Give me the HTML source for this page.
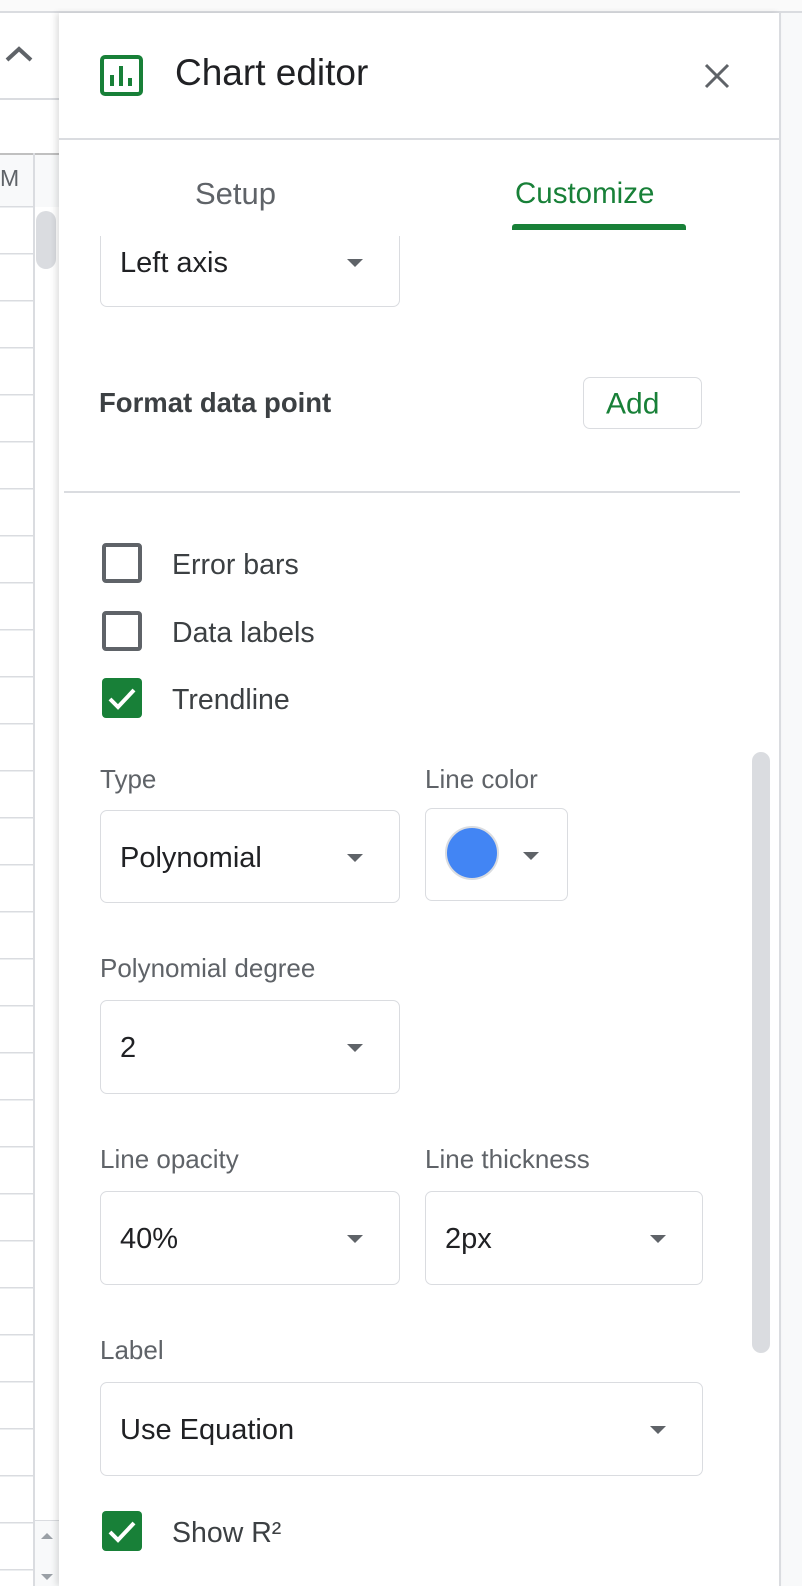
<!DOCTYPE html>
<html><head><meta charset="utf-8"><style>
*{box-sizing:border-box;margin:0;padding:0}
body{width:802px;height:1586px;position:relative;overflow:hidden;background:#fff;font-family:"Liberation Sans",Arial,sans-serif;color:#202124}
.a{position:absolute}
.dd{position:absolute;border:1.5px solid #dadce0;border-radius:7px;background:#fff}
.dd span{position:absolute;left:19px;top:50%;transform:translateY(-46%);font-size:29px;color:#202124}
.arr{position:absolute;width:0;height:0;border-left:8px solid transparent;border-right:8px solid transparent;border-top:8px solid #5f6368;top:50%;margin-top:-3px}
.lbl{position:absolute;font-size:26px;color:#5f6368}
.cb{position:absolute;left:102px;width:40px;height:40px;border:4px solid #5f6368;border-radius:4px}
.cbk{position:absolute;left:102px;width:40px;height:40px;background:#188038;border-radius:4px}
.ct{position:absolute;left:172px;font-size:28.5px;color:#3c4043}
</style></head><body>
<div class="a" style="left:0;top:11px;width:802px;height:2px;background:#dadce0"></div>
<div class="a" style="left:0;top:0;width:802px;height:11px;background:#fafafa"></div>
<svg class="a" style="left:4px;top:44px" width="30" height="22"><path d="M3 16 L15 5 L27 16" fill="none" stroke="#5f6368" stroke-width="4"/></svg>
<div class="a" style="left:0;top:98px;width:60px;height:2px;background:#dadce0"></div>
<div class="a" style="left:0;top:153px;width:60px;height:54px;background:#f8f9fa;border-top:2px solid #c0c0c0"></div>
<div class="a" style="left:0;top:165px;font-size:23px;color:#5f6368">M</div>
<div class="a" style="left:33px;top:153px;width:2px;height:1433px;background:#dadce0"></div>
<div class="a" style="left:35px;top:207px;width:24px;height:1379px;background:#fff"></div>
<div class="a" style="left:36px;top:211px;width:20px;height:58px;background:#dadce0;border-radius:10px"></div>
<div class="a" style="left:0;top:206px;width:33px;height:1380px;background:repeating-linear-gradient(to bottom,#dadce0 0,#dadce0 1.5px,#fff 1.5px,#fff 47px)"></div>
<div class="a" style="left:35px;top:1520px;width:24px;height:66px;background:#f8f9fa;border-top:1px solid #dadce0"></div>
<div class="a" style="left:41px;top:1533px;border-left:6px solid transparent;border-right:6px solid transparent;border-bottom:6px solid #9aa0a6"></div>
<div class="a" style="left:41px;top:1574px;border-left:6px solid transparent;border-right:6px solid transparent;border-top:6px solid #9aa0a6"></div>
<div class="a" style="left:781px;top:13px;width:21px;height:1573px;background:#f8f9fa"></div>
<div class="a" style="left:59px;top:13px;width:721px;height:1573px;background:#fff;box-shadow:-3px 0 6px rgba(0,0,0,.12)"></div>
<div class="a" style="left:779px;top:13px;width:2px;height:1573px;background:#dadce0"></div>
<svg class="a" style="left:100px;top:55px" width="43" height="41"><rect x="2" y="2" width="39" height="37" rx="3" fill="none" stroke="#188038" stroke-width="4"/><rect x="10" y="20" width="4" height="11" fill="#188038"/><rect x="19" y="11" width="4" height="20" fill="#188038"/><rect x="28" y="23" width="4" height="8" fill="#188038"/></svg>
<div class="a" style="left:175px;top:52px;font-size:37px;color:#202124">Chart editor</div>
<svg class="a" style="left:704px;top:63px" width="26" height="26"><path d="M2 2L24 24M24 2L2 24" stroke="#5f6368" stroke-width="3"/></svg>
<div class="a" style="left:59px;top:138px;width:720px;height:2px;background:#dadce0"></div>
<div class="a" style="left:195px;top:176px;font-size:31px;color:#5f6368">Setup</div>
<div class="a" style="left:515px;top:177px;font-size:29.5px;color:#188038">Customize</div>
<div class="a" style="left:512px;top:224px;width:174px;height:6px;background:#188038;border-radius:3px 3px 0 0"></div>
<div class="a" style="left:64px;top:236px;width:680px;height:80px;overflow:hidden">
 <div class="dd" style="left:36px;top:-20px;width:300px;height:91px"><span>Left axis</span><div class="arr" style="left:246px"></div></div>
</div>
<div class="a" style="left:99px;top:387px;font-size:27.5px;font-weight:bold;color:#3c4043">Format data point</div>
<div class="dd" style="left:583px;top:377px;width:119px;height:52px"><span style="left:22px;color:#188038;font-size:30px">Add</span></div>
<div class="a" style="left:64px;top:491px;width:676px;height:2px;background:#dadce0"></div>
<div class="cb" style="top:543px"></div><div class="ct" style="top:549px">Error bars</div>
<div class="cb" style="top:611px"></div><div class="ct" style="top:617px">Data labels</div>
<div class="cbk" style="top:678px"><svg width="40" height="40"><path d="M8 21L16 29L32 12" fill="none" stroke="#fff" stroke-width="4"/></svg></div><div class="ct" style="top:684px">Trendline</div>
<div class="a" style="left:752px;top:752px;width:18px;height:601px;background:#dadce0;border-radius:9px"></div>
<div class="lbl" style="left:100px;top:764px">Type</div>
<div class="lbl" style="left:425px;top:764px">Line color</div>
<div class="dd" style="left:100px;top:810px;width:300px;height:93px"><span>Polynomial</span><div class="arr" style="left:246px"></div></div>
<div class="dd" style="left:425px;top:808px;width:143px;height:93px"><div class="a" style="left:19px;top:17px;width:54px;height:54px;border-radius:50%;background:#4285f4;border:2px solid #dadce0"></div><div class="arr" style="left:97px"></div></div>
<div class="lbl" style="left:100px;top:953px">Polynomial degree</div>
<div class="dd" style="left:100px;top:1000px;width:300px;height:94px"><span>2</span><div class="arr" style="left:246px"></div></div>
<div class="lbl" style="left:100px;top:1144px">Line opacity</div>
<div class="lbl" style="left:425px;top:1144px">Line thickness</div>
<div class="dd" style="left:100px;top:1191px;width:300px;height:94px"><span>40%</span><div class="arr" style="left:246px"></div></div>
<div class="dd" style="left:425px;top:1191px;width:278px;height:94px"><span>2px</span><div class="arr" style="left:224px"></div></div>
<div class="lbl" style="left:100px;top:1335px">Label</div>
<div class="dd" style="left:100px;top:1382px;width:603px;height:94px"><span>Use Equation</span><div class="arr" style="left:549px"></div></div>
<div class="cbk" style="top:1511px"><svg width="40" height="40"><path d="M8 21L16 29L32 12" fill="none" stroke="#fff" stroke-width="4"/></svg></div><div class="ct" style="top:1517px">Show R²</div>
</body></html>
